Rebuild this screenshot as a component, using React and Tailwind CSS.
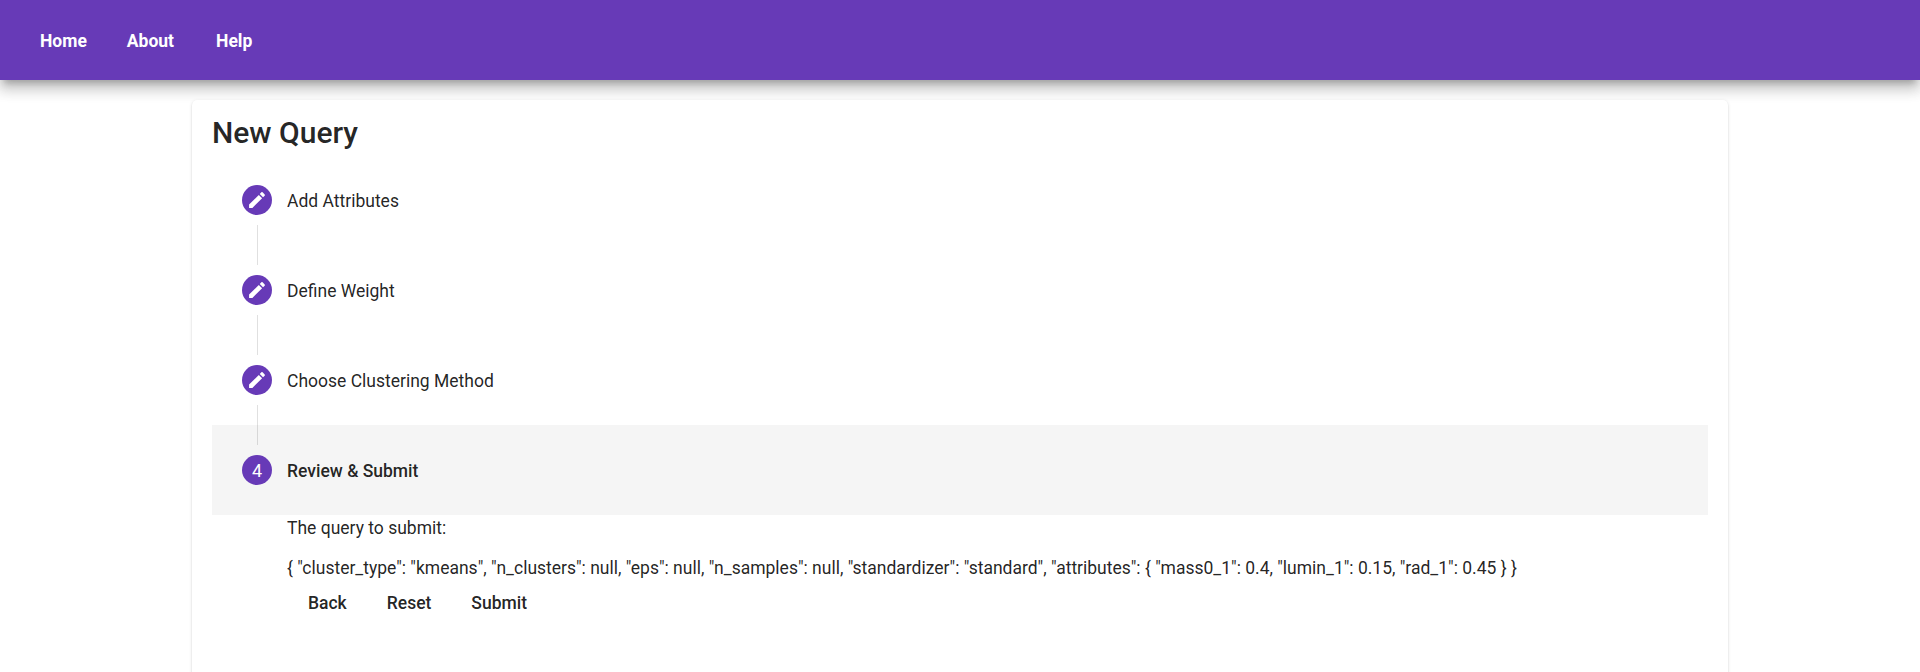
const steps = ["Add Attributes", "Define Weight", "Choose Clustering Method", "Review & Submit"];

function Step({ label, index }) {
  const last = index === 3;
  return (
    <li className={`relative flex h-[90px] items-center px-[30px] ${last ? "bg-[#f5f5f5]" : ""}`}>
      <span className="mr-[15px] flex h-[30px] w-[30px] items-center justify-center rounded-full bg-[#673ab7] text-[18px] text-white">
        {last ? "4" : (
          <svg viewBox="-0.5 -0.5 25 25" className="h-[22px] w-[22px]" fill="currentColor">
            <path d="M3 17.25V21h3.75L17.81 9.94l-3.75-3.75L3 17.25zM20.71 7.04a.996.996 0 0 0 0-1.41l-2.34-2.34a.996.996 0 0 0-1.41 0l-1.83 1.83 3.75 3.75 1.83-1.83z" />
          </svg>
        )}
      </span>
      <span className={last ? "pt-0.5 font-medium" : "pt-0.5"}>{label}</span>
      {!last && <span className="absolute top-[70px] left-[45px] z-10 h-10 w-px bg-black/12" />}
    </li>
  );
}

export default function App() {
  return (
    <div className="h-[672px] overflow-hidden bg-white font-['Roboto',sans-serif] text-[17.5px] text-black/87">
      <header className="flex h-20 items-center gap-10 bg-[#673ab7] px-10 pt-0.5 text-[17.5px] font-bold text-white shadow-[0_6.25px_6.25px_-3.75px_rgba(0,0,0,0.2),0_10px_12.5px_1.25px_rgba(0,0,0,0.14),0_3.75px_17.5px_2.5px_rgba(0,0,0,0.12)]">
        <a>Home</a>
        <a>About</a>
        <a className="ml-0.5">Help</a>
      </header>
      <main className="relative mx-[192px] mt-5 h-[700px] rounded-[5px] bg-white px-5 pt-[13px] shadow-[0_2.5px_1.25px_-1.25px_rgba(0,0,0,0.2),0_1.25px_1.25px_0_rgba(0,0,0,0.14),0_1.25px_3.75px_0_rgba(0,0,0,0.12)]">
        <h1 className="h-[42px] text-[30px] leading-[40px] font-medium">New Query</h1>
        <ol>{steps.map((s, i) => <Step key={s} label={s} index={i} />)}</ol>
        <section className="pt-px pl-[75px]">
          <p className="h-[40px] leading-[25px]">The query to submit:</p>
          <p className="h-[25px] leading-[25px] tracking-[-0.006px] whitespace-nowrap">{'{ "cluster_type": "kmeans", "n_clusters": null, "eps": null, "n_samples": null, "standardizer": "standard", "attributes": { "mass0_1": 0.4, "lumin_1": 0.15, "rad_1": 0.45 } }'}</p>
          <div className="flex h-[45px] items-center pl-px font-medium">
            <button className="px-5">Back</button>
            <button className="px-5">Reset</button>
            <button className="px-5">Submit</button>
          </div>
        </section>
      </main>
    </div>
  );
}
